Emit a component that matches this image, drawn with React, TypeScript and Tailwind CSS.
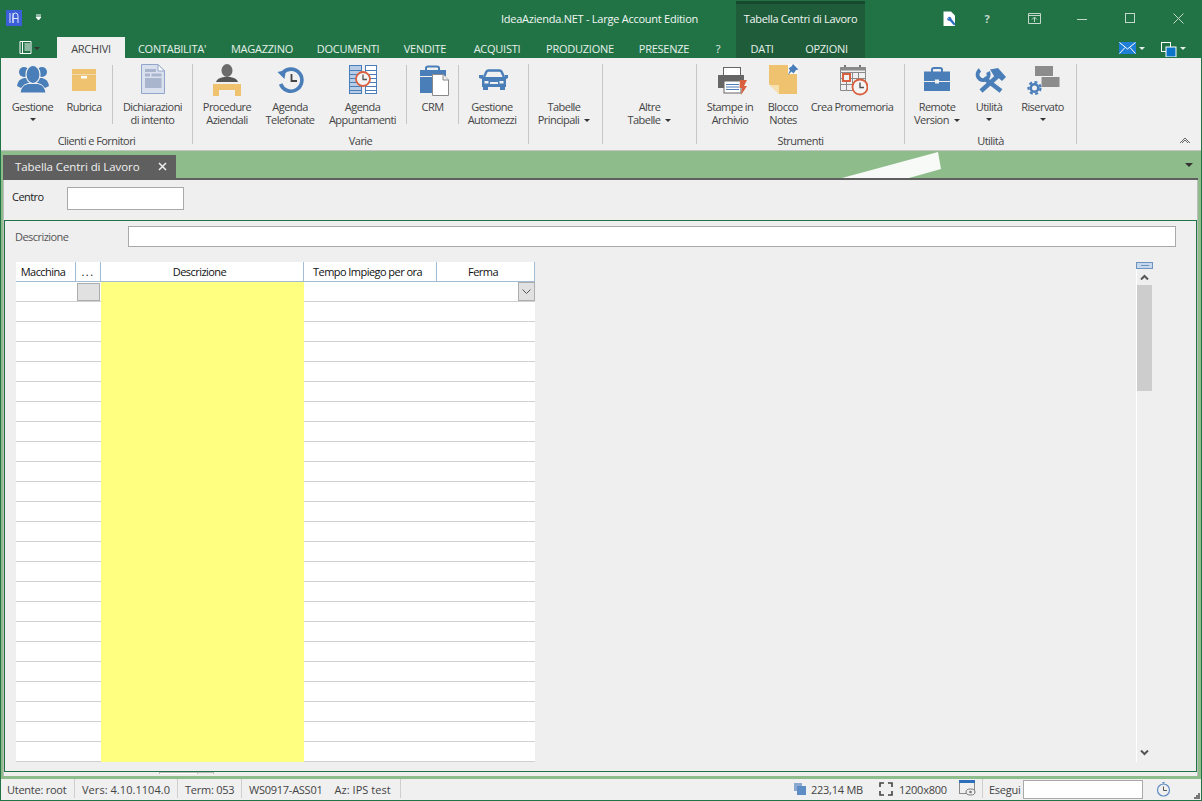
import React from 'react';

const BLUE = '#4a7eb9';
const AMBER = '#efc26f';
const GREY = '#6b6b6b';
const RED = '#d9603f';

const IconPeople = () => (
  <svg width="32" height="32" viewBox="0 0 32 32">
    <circle cx="7" cy="8" r="5" fill={BLUE} />
    <circle cx="25" cy="8" r="5" fill={BLUE} />
    <path d="M0 22 Q1 15 7 14 L25 14 Q31 15 32 22 L28 24 L4 24Z" fill={BLUE} />
    <ellipse cx="16" cy="10.5" rx="7" ry="9" fill={BLUE} stroke="#f0f0f0" strokeWidth="1.2" />
    <path d="M3 29 Q4 21 11 19.5 L21 19.5 Q28 21 29 29Z" fill={BLUE} stroke="#f0f0f0" strokeWidth="1" />
  </svg>
);

const IconBox = () => (
  <svg width="32" height="32" viewBox="0 0 32 32">
    <rect x="4" y="5" width="24" height="5" fill={AMBER} />
    <rect x="4" y="10.5" width="24" height="16.5" fill={AMBER} />
    <rect x="13" y="12" width="6" height="2.5" fill="#fff" />
  </svg>
);

const IconDoc = () => (
  <svg width="32" height="32" viewBox="0 0 32 32">
    <path d="M4.5 .5 H21 L27.5 7 V29.5 H4.5Z" fill="#d9e0ee" stroke="#93a6ca" />
    <path d="M21 .5 V7 H27.5Z" fill="#fff" stroke="#93a6ca" />
    <rect x="8" y="5" width="11" height="3" fill="#a9b5cc" />
    <rect x="8" y="9.5" width="5" height="3" fill="#a9b5cc" />
    <rect x="14.5" y="9.5" width="10" height="3" fill="#a9b5cc" />
    <rect x="8" y="14" width="16.5" height="10" fill="#a9b5cc" />
  </svg>
);

const IconDesk = () => (
  <svg width="32" height="32" viewBox="0 0 32 32">
    <ellipse cx="16" cy="6.5" rx="5.5" ry="6.5" fill={GREY} />
    <path d="M5 18 Q6 14 13 13 L19 13 Q26 14 27 18Z" fill="#555" />
    <path d="M2 20 H30 V32 H24 V26 H8 V32 H2Z" fill={AMBER} />
  </svg>
);

const IconHistory = () => (
  <svg width="32" height="32" viewBox="0 0 32 32">
    <path d="M9 8.5 A11 11 0 1 1 6.6 20" fill="none" stroke={BLUE} strokeWidth="3.6" />
    <path d="M3.5 8 L12 6 L10.5 15Z" fill={BLUE} />
    <path d="M17.5 10 V17 H23" fill="none" stroke="#444" strokeWidth="1.8" />
  </svg>
);

const IconAgenda = () => (
  <svg width="32" height="32" viewBox="0 0 32 32">
    <rect x="2.5" y="1.5" width="12" height="28" fill="#b8cde5" stroke={BLUE} />
    <rect x="18.5" y="1.5" width="11" height="28" fill="#fff" stroke={BLUE} />
    {[6, 10, 14, 18, 22, 26].map(y => (
      <path key={y} d={`M3 ${y}.5 H14 M19 ${y}.5 H29`} stroke={BLUE} strokeWidth="1" />
    ))}
    <circle cx="16" cy="15" r="7" fill="#f4f4f4" stroke={RED} strokeWidth="1.8" />
    <path d="M16 10.5 V15.5 H20" fill="none" stroke="#555" strokeWidth="1.3" />
  </svg>
);

const IconCrm = () => (
  <svg width="32" height="32" viewBox="0 0 32 32">
    <path d="M9 6 V4 Q9 2.5 11 2.5 H20 Q22 2.5 22 4 V6" fill="none" stroke={BLUE} strokeWidth="2" />
    <rect x="3" y="6" width="26" height="6" fill={BLUE} />
    <rect x="3" y="13" width="26" height="16" fill={BLUE} />
    <path d="M15.5 10.5 H26 L31.5 16 V31.5 H15.5Z" fill="#fff" stroke="#8a8a8a" />
    <path d="M26 10.5 V16 H31.5" fill="#eee" stroke="#8a8a8a" />
  </svg>
);

const IconCar = () => (
  <svg width="32" height="32" viewBox="0 0 32 32" className="overflow-visible">
    <path d="M8 13 L10.5 7.5 Q11 6.5 12.5 6.5 H23.5 Q25 6.5 25.5 7.5 L28 13" fill="none" stroke={BLUE} strokeWidth="2.4" />
    <path d="M3 11 H7 V13 H29 V11 H32 V14 L30 15 V23 H6 V15 L3 14Z" fill={BLUE} />
    <rect x="7" y="23" width="5" height="3" fill={BLUE} />
    <rect x="24" y="23" width="5" height="3" fill={BLUE} />
    <rect x="8.5" y="17" width="4" height="2.5" fill="#f0f0f0" />
    <rect x="23.5" y="17" width="4" height="2.5" fill="#f0f0f0" />
    <rect x="14" y="18" width="8" height="2" fill="#f0f0f0" />
  </svg>
);

const IconPrinter = () => (
  <svg width="32" height="32" viewBox="0 0 32 32" className="overflow-visible">
    <rect x="9.5" y="3.5" width="17" height="8" fill="#fff" stroke="#666" />
    <path d="M4 11 H30 V24 H26 V18 H10 V24 H4Z" fill="#666" />
    <rect x="10" y="17" width="17" height="12" fill="#fff" stroke="#666" />
    <path d="M12 20.5 H25 M12 23 H25 M12 25.5 H25" stroke={BLUE} strokeWidth="1.2" />
    <path d="M26 16 H33 L30 22 H33 L27 31 L28 24 H25.5Z" fill={RED} />
  </svg>
);

const IconNote = () => (
  <svg width="32" height="32" viewBox="0 0 32 32" className="overflow-visible">
    <path d="M2 1 H30 V30 H12 L2 20Z" fill={AMBER} />
    <path d="M2.5 21 H12 V30Z" fill="#f8e0ae" />
    <rect x="21" y="0" width="10" height="10" fill="#f7f7f7" />
    <path d="M26 0 L31.5 5.5 L29 6 L26.5 9.5 L24.5 7.5 L21 11 L23 6 L21.5 4.5 L25 2Z" fill={BLUE} />
  </svg>
);

const IconCalendar = () => (
  <svg width="32" height="32" viewBox="0 0 32 32">
    <path d="M4.5 3.5 H29.5 V26.5 H4.5Z M4.5 8.5 H29.5 M4.5 14.5 H29.5 M4.5 20.5 H29.5 M10.5 8.5 V26.5 M16.5 8.5 V26.5 M22.5 8.5 V26.5" fill="#f0f0f0" stroke="#8a8a8a" />
    <path d="M9 1 V5 M24 1 V5" stroke="#777" strokeWidth="2" />
    <rect x="4.5" y="3" width="25" height="3.5" fill="#8a8a8a" />
    <rect x="7" y="10" width="7" height="7" fill="#f0f0f0" stroke={RED} strokeWidth="2" />
    <circle cx="24" cy="23" r="7.5" fill="#f4f4f4" stroke={RED} strokeWidth="1.8" />
    <path d="M24 18.5 V23.5 H28" fill="none" stroke="#555" strokeWidth="1.4" />
  </svg>
);

const IconCase = () => (
  <svg width="32" height="32" viewBox="0 0 32 32">
    <path d="M11 8 V5.5 Q11 4 13 4 H19 Q21 4 21 5.5 V8" fill="none" stroke={BLUE} strokeWidth="2" />
    <rect x="3" y="7.5" width="26" height="9.5" fill={BLUE} />
    <rect x="3" y="18" width="26" height="9" fill={BLUE} />
    <rect x="14" y="15.5" width="4" height="4" fill="#f0f0f0" />
  </svg>
);

const IconTools = () => (
  <svg width="32" height="32" viewBox="0 0 32 32" className="overflow-visible">
    <path d="M11 14 L28 27" stroke={BLUE} strokeWidth="4.5" />
    <path d="M7 6 A5.5 5.5 0 1 0 15 8" fill="none" stroke={BLUE} strokeWidth="4" />
    <path d="M26 11 L8 27" stroke={BLUE} strokeWidth="4.5" />
    <path d="M17 5.5 L25 4 L33 13 L29 17 L25 13.5 L21 12Z" fill={BLUE} />
  </svg>
);

const IconConfig = () => (
  <svg width="32" height="32" viewBox="0 0 32 32" className="overflow-visible">
    <rect x="8" y="2" width="18" height="10" fill="#8c8c8c" />
    <rect x="14.5" y="13" width="18" height="10" fill="#8c8c8c" />
    <circle cx="7.5" cy="24" r="3.8" fill="none" stroke={BLUE} strokeWidth="2.6" />
    <circle cx="7.5" cy="24" r="6" fill="none" stroke={BLUE} strokeWidth="2.2" strokeDasharray="3 2.5" />
  </svg>
);

const Caret = ({ className = '' }: { className?: string }) => (
  <span className={`inline-block w-0 h-0 border-x-[3px] border-x-transparent border-t-[3px] border-t-[#333] ${className}`} />
);

interface RibbonButtonProps {
  width: string;
  icon?: React.ReactNode;
  label: string;
  second?: string;
  caret?: 'inline' | 'below';
}

const RibbonButton: React.FC<RibbonButtonProps> = ({ width, icon, label, second, caret }) => (
  <div className={`${width} flex flex-col items-center shrink-0`}>
    <div className="h-[36px] mt-[6px] flex justify-center">{icon}</div>
    <div className="text-center leading-[13px] whitespace-nowrap">{label}</div>
    {second && (
      <div className="text-center leading-[13px] whitespace-nowrap">
        {second}
        {caret === 'inline' && <Caret className="ml-[5px] mb-[2px]" />}
      </div>
    )}
    {caret === 'below' && <Caret className="mt-[5px]" />}
  </div>
);

const InnerSep = ({ className = '' }: { className?: string }) => (
  <div className={`w-px h-[59px] mt-[7px] bg-[#c6c6c6] shrink-0 ${className}`} />
);

const GroupSep = () => <div className="w-px h-[80px] mt-[6px] bg-[#c6c6c6] shrink-0" />;

const Group = ({ width, label, children }: { width: string; label?: string; children: React.ReactNode }) => (
  <div className={`${width} shrink-0 flex flex-col`}>
    <div className="flex h-[76px]">{children}</div>
    <div className="text-center leading-[13px]">{label}</div>
  </div>
);

const RibbonTab = ({ width, children }: { width: string; children: React.ReactNode }) => (
  <div className={`${width} shrink-0 text-center leading-[21px] pt-px text-[#e6f0ea]`}>{children}</div>
);

const StatusSep = () => <div className="w-px h-[19px] bg-[#cfcfcf] shrink-0" />;

const columns = [
  { name: 'Macchina', width: 'w-[60px] pr-[5px]' },
  { name: '...', width: 'w-[25px] tracking-[1.5px]' },
  { name: 'Descrizione', width: 'w-[203px] pr-[5px]' },
  { name: 'Tempo Impiego per ora', width: 'w-[133px] pr-[5px]' },
  { name: 'Ferma', width: 'w-[98px] pr-[5px]' },
];

const rows = Array.from({ length: 24 }, (_, i) => i);

export default function App() {
  return (
    <div className="w-[1202px] h-[801px] overflow-hidden bg-[#217346] font-['Open_Sans',sans-serif] text-[11px] tracking-[-0.25px] text-[#444]">
      {/* Title bar */}
      <div className="flex h-[37px] text-[#f2f7f4]">
        <div className="w-[6px] shrink-0" />
        <div className="w-[16px] h-[16px] mt-[10px] bg-[#3b5fd9] shrink-0 flex items-center justify-center">
          <svg width="12" height="12" viewBox="0 0 12 12">
            <path d="M2 1 V11 M5 1 V11 M5 11 V4 Q5 1 7.5 1 Q10 1 10 4 V11 M5 6.5 H10" fill="none" stroke="#dfe6fb" strokeWidth="1" />
          </svg>
        </div>
        <div className="w-[13px] shrink-0" />
        <svg width="8" height="8" viewBox="0 0 8 8" className="mt-[14px] shrink-0">
          <path d="M1 1 H6 M1 3 H6 L3.5 6Z" fill="#fff" stroke="#fff" strokeWidth="1" />
        </svg>
        <div className="w-[458px] shrink-0" />
        <div className="w-[235px] shrink-0 leading-[38px] whitespace-nowrap">IdeaAzienda.NET - Large Account Edition</div>
        <div className="w-[129px] shrink-0 mt-px bg-[#1e5c3a] border-t-[3px] border-[#17492e] text-center leading-[30px] tracking-[-0.3px] whitespace-nowrap">Tabella Centri di Lavoro</div>
        <div className="w-[92px] shrink-0 flex justify-end pt-[11px]">
          <svg width="14" height="16" viewBox="0 0 14 16">
            <path d="M.5 .5 H8 L12 4.5 V15 H.5Z" fill="#fff" />
            <path d="M5 6 Q8 5 8.5 8 L12.5 13 L11 14.5 L7 10 Q4 10 4 7 L6 8Z" fill="#2a6fc0" />
          </svg>
        </div>
        <div className="w-[60px] shrink-0 text-center leading-[37px] text-[#c4d8cc] font-bold">?</div>
        <div className="w-[34px] shrink-0 flex justify-center pt-[13px]">
          <svg width="13" height="11" viewBox="0 0 13 11">
            <path d="M.5 .5 H12.5 V10.5 H.5Z M.5 2.5 H12.5 M6.5 9 V4.5 M4 6.5 L6.5 4 L9 6.5" fill="none" stroke="#c4d8cc" />
          </svg>
        </div>
        <div className="w-[62px] shrink-0 flex justify-center pt-[19px]">
          <div className="w-[10px] h-px bg-[#c4d8cc]" />
        </div>
        <div className="w-[34px] shrink-0 flex justify-center pt-[13px]">
          <div className="w-[10px] h-[10px] border border-[#c4d8cc]" />
        </div>
        <div className="w-[55px] shrink-0 pl-[26px] pt-[13px]">
          <svg width="11" height="11" viewBox="0 0 11 11">
            <path d="M.5 .5 L10.5 10.5 M10.5 .5 L.5 10.5" stroke="#c4d8cc" />
          </svg>
        </div>
      </div>

      {/* Ribbon tabs */}
      <div className="flex h-[21px]">
        <div className="w-[57px] shrink-0 pl-[19px] pt-[4px] flex gap-[2px]">
          <svg width="13" height="13" viewBox="0 0 13 13">
            <path d="M1 .5 H12 V12.5 H1Z" fill="none" stroke="#fff" />
            <path d="M3.5 1 V12 M5.5 3 H11 M5.5 5 H11 M5.5 7 H11 M5.5 9 H11" fill="none" stroke="#fff" strokeWidth="1" />
          </svg>
          <Caret className="mt-[6px] border-t-[#9db9a9]" />
        </div>
        <div className="w-[68px] shrink-0 text-center leading-[21px] pt-px bg-[#f0f0f0] text-[#444]">ARCHIVI</div>
        <RibbonTab width="w-[94px]">CONTABILITA'</RibbonTab>
        <RibbonTab width="w-[86px]">MAGAZZINO</RibbonTab>
        <RibbonTab width="w-[86px]">DOCUMENTI</RibbonTab>
        <RibbonTab width="w-[68px]">VENDITE</RibbonTab>
        <RibbonTab width="w-[76px]">ACQUISTI</RibbonTab>
        <RibbonTab width="w-[90px]">PRODUZIONE</RibbonTab>
        <RibbonTab width="w-[78px]">PRESENZE</RibbonTab>
        <RibbonTab width="w-[30px]">?</RibbonTab>
        <div className="w-[3px] shrink-0" />
        <div className="w-[129px] shrink-0 flex bg-[#1e5c3a]">
          <RibbonTab width="w-[52px]">DATI</RibbonTab>
          <RibbonTab width="w-[77px]">OPZIONI</RibbonTab>
        </div>
        <div className="w-[254px] shrink-0" />
        <div className="flex pt-[5px] items-start">
          <svg width="17" height="12" viewBox="0 0 17 12" className="shrink-0">
            <rect width="17" height="12" fill="#1f7fd6" />
            <path d="M.5 .5 L8.5 7 L16.5 .5 M.5 11.5 L6 5.5 M16.5 11.5 L11 5.5" fill="none" stroke="#fff" />
          </svg>
          <Caret className="ml-[3px] mt-[5px] border-t-[#e6f0ea]" />
          <svg width="16" height="15" viewBox="0 0 16 15" className="ml-[16px] shrink-0">
            <rect x=".5" y=".5" width="9" height="9" fill="#217346" stroke="#fff" />
            <rect x="5" y="5" width="10" height="10" fill="#0b74c9" stroke="#fff" strokeWidth="1" />
          </svg>
          <Caret className="ml-[3px] mt-[5px] border-t-[#e6f0ea]" />
        </div>
      </div>

      {/* Ribbon */}
      <div className="flex h-[92px] mx-px bg-[#f0f0f0] tracking-[-0.55px]">
        <Group width="w-[191px]" label="Clienti e Fornitori">
          <div className="w-[6px] shrink-0" />
          <RibbonButton width="w-[51px]" icon={<IconPeople />} label="Gestione" caret="below" />
          <RibbonButton width="w-[52px]" icon={<IconBox />} label="Rubrica" />
          <div className="w-[2px] shrink-0" />
          <InnerSep />
          <RibbonButton width="w-[79px]" icon={<IconDoc />} label="Dichiarazioni" second="di intento" />
        </Group>
        <GroupSep />
        <Group width="w-[335px]" label="Varie">
          <RibbonButton width="w-[68px]" icon={<IconDesk />} label="Procedure" second="Aziendali" />
          <RibbonButton width="w-[58px]" icon={<IconHistory />} label="Agenda" second="Telefonate" />
          <RibbonButton width="w-[87px]" icon={<IconAgenda />} label="Agenda" second="Appuntamenti" />
          <InnerSep />
          <RibbonButton width="w-[51px]" icon={<IconCrm />} label="CRM" />
          <InnerSep />
          <RibbonButton width="w-[66px]" icon={<IconCar />} label="Gestione" second="Automezzi" />
        </Group>
        <GroupSep />
        <Group width="w-[73px]">
          <RibbonButton width="w-[70px]" label="Tabelle" second="Principali" caret="inline" />
        </Group>
        <GroupSep />
        <Group width="w-[93px]">
          <RibbonButton width="w-[93px]" label="Altre" second="Tabelle" caret="inline" />
        </Group>
        <GroupSep />
        <Group width="w-[207px]" label="Strumenti">
          <RibbonButton width="w-[66px]" icon={<IconPrinter />} label="Stampe in" second="Archivio" />
          <RibbonButton width="w-[40px]" icon={<IconNote />} label="Blocco" second="Notes" />
          <RibbonButton width="w-[98px]" icon={<IconCalendar />} label="Crea Promemoria" />
        </Group>
        <GroupSep />
        <Group width="w-[171px]" label="Utilità">
          <RibbonButton width="w-[64px]" icon={<IconCase />} label="Remote" second="Version" caret="inline" />
          <RibbonButton width="w-[40px]" icon={<IconTools />} label="Utilità" caret="below" />
          <RibbonButton width="w-[67px]" icon={<IconConfig />} label="Riservato" caret="below" />
        </Group>
        <GroupSep />
        <div className="flex-1 flex items-end justify-end pr-[10px] pb-[6px]">
          <svg width="12" height="8" viewBox="0 0 12 8">
            <path d="M1 7 L6 2 L11 7 M3 7 L6 4 L9 7" fill="none" stroke="#666" />
          </svg>
        </div>
      </div>
      <div className="h-px mx-px bg-[#c4c4c4]" />

      {/* Document tab strip */}
      <div className="relative flex h-[27px] mx-px bg-[#8fbc8b]">
        <div className="w-[173px] h-[23px] ml-[2px] mt-[4px] bg-[#5f5f5f] flex items-center text-[#f0f0f0] text-[11.5px] tracking-[-0.08px]">
          <span className="ml-[12px] w-[135px] whitespace-nowrap">Tabella Centri di Lavoro</span>
          <svg width="9" height="9" viewBox="0 0 9 9" className="ml-[8px]">
            <path d="M1 1 L8 8 M8 1 L1 8" stroke="#f0f0f0" strokeWidth="1.5" />
          </svg>
        </div>
        <svg width="110" height="27" viewBox="0 0 110 27" className="absolute left-[838px] top-0">
          <path d="M3 27 L99 1 L102 18 L70 27Z" fill="#f7faf6" />
        </svg>
        <div className="absolute right-[8px] top-[12px] w-0 h-0 border-x-[4px] border-x-transparent border-t-[4px] border-t-[#333]" />
      </div>

      {/* Work area */}
      <div className="mx-px bg-[#8fbc8b] px-[2px] h-[601px] tracking-[-0.55px]">
        <div className="h-[2px] w-[1195px] bg-[#5f5f5f]" />
        <div className="w-[1195px] border-l border-r border-[#bdbdbd] bg-[#efefef]">
          {/* Centro header */}
          <div className="flex h-[40px] text-[#222]">
            <div className="w-[8px] shrink-0" />
            <div className="w-[55px] shrink-0 pt-[10px] leading-[14px]">Centro</div>
            <div className="w-[117px] h-[23px] mt-[7px] bg-white border border-[#a9a9a9]" />
          </div>

          {/* Detail panel */}
          <div className="h-[552px] border border-[#217346] bg-[#efefef]">
            <div className="flex mt-[5px] ml-[10px]">
              <div className="w-[113px] shrink-0 leading-[21px] text-[#555]">Descrizione</div>
              <div className="w-[1048px] h-[21px] bg-white border border-[#a9a9a9]" />
            </div>
            <div className="flex mt-[15px] ml-[11px]">
              {/* Grid */}
              <div className="w-[519px] shrink-0 text-[#111]">
                <div className="flex h-[20px] bg-white border-b border-[#a3bcd6]">
                  {columns.map(col => (
                    <div key={col.name} className={`${col.width} shrink-0 text-center leading-[19px] whitespace-nowrap border-r border-[#a3bcd6]`}>
                      {col.name}
                    </div>
                  ))}
                </div>
                {rows.map(i => (
                  <div key={i} className="flex h-[20px]">
                    <div className="w-[60px] shrink-0 bg-white border-b border-[#d0d0d0]" />
                    <div className="w-[25px] shrink-0 bg-white border-b border-[#d0d0d0]">
                      {i === 0 && <div className="w-[23px] h-[18px] mt-px ml-px bg-[#e1e1e1] border border-[#adadad]" />}
                    </div>
                    <div className="w-[203px] shrink-0 bg-[#ffff80]" />
                    <div className="w-[231px] shrink-0 flex justify-end bg-white border-b border-[#d0d0d0]">
                      {i === 0 && (
                        <div className="w-[17px] h-[19px] bg-[#e1e1e1] border border-[#adadad] flex items-center justify-center">
                          <svg width="9" height="5" viewBox="0 0 9 5">
                            <path d="M.5 .5 L4.5 4.5 L8.5 .5" fill="none" stroke="#555" />
                          </svg>
                        </div>
                      )}
                    </div>
                  </div>
                ))}
              </div>
              {/* Scrollbar */}
              <div className="w-[17px] h-[500px] ml-[601px] shrink-0 border-l border-white flex flex-col items-start">
                <div className="w-[17px] h-[7px] -ml-px shrink-0 bg-[#c5d8ee] border border-[#6d93bf] flex items-center justify-center">
                  <div className="w-[8px] h-px bg-[#6d93bf]" />
                </div>
                <svg width="9" height="6" viewBox="0 0 9 6" className="mt-[5px] ml-[3px] shrink-0">
                  <path d="M1 5.5 L4.5 2 L8 5.5" fill="none" stroke="#555" strokeWidth="2" />
                </svg>
                <div className="w-[15px] h-[106px] mt-[5px] bg-[#cdcdcd] shrink-0" />
                <div className="flex-1" />
                <svg width="9" height="6" viewBox="0 0 9 6" className="mb-[6px] ml-[3px] shrink-0">
                  <path d="M1 .5 L4.5 4 L8 .5" fill="none" stroke="#555" strokeWidth="2" />
                </svg>
              </div>
            </div>
          </div>

          {/* Hidden strip under the panel */}
          <div className="flex h-[4px] bg-[#efefef]">
            <div className="w-[155px] shrink-0" />
            <div className="w-[39px] h-[2px] bg-white border-x border-t border-[#bbb]" />
            <div className="w-[16px] h-[2px] border-r border-t border-[#bbb]" />
          </div>
        </div>
      </div>

      {/* Status bar */}
      <div className="flex h-[21px] mx-px items-start bg-[#f0f0f0] text-[#444] leading-[21px]">
        <div className="w-[73px] shrink-0 pl-[6px] whitespace-nowrap">Utente: root</div>
        <StatusSep />
        <div className="w-[102px] shrink-0 pl-[7px] whitespace-nowrap tracking-[0.05px]">Vers: 4.10.1104.0</div>
        <StatusSep />
        <div className="w-[63px] shrink-0 pl-[7px] whitespace-nowrap">Term: 053</div>
        <StatusSep />
        <div className="w-[158px] shrink-0 pl-[7px] flex gap-[12px] whitespace-nowrap">
          <span>WS0917-ASS01</span>
          <span className="tracking-[0.05px]">Az: IPS test</span>
        </div>
        <StatusSep />
        <div className="w-[393px] shrink-0" />
        <svg width="12" height="12" viewBox="0 0 12 12" className="mt-[4px] shrink-0">
          <rect x="0" y="0" width="8" height="8" fill="#8aa9d0" />
          <rect x="3" y="3" width="9" height="9" fill="#5e8cc4" />
        </svg>
        <div className="w-[73px] shrink-0 pl-[5px] whitespace-nowrap">223,14 MB</div>
        <svg width="14" height="14" viewBox="0 0 14 14" className="mt-[3px] shrink-0">
          <path d="M1 5 V1 H5 M9 1 H13 V5 M13 9 V13 H9 M5 13 H1 V9" fill="none" stroke="#444" strokeWidth="1.6" />
        </svg>
        <div className="w-[66px] shrink-0 pl-[6px] whitespace-nowrap">1200x800</div>
        <svg width="17" height="16" viewBox="0 0 17 16" className="mt-[1px] shrink-0">
          <rect x=".5" y=".5" width="15" height="13" fill="#f0f0f0" stroke="#8a8a8a" />
          <rect x="0" y="0" width="16" height="3" fill="#2d6fb8" />
          <ellipse cx="11.5" cy="12" rx="4.5" ry="3" fill="#f0f0f0" stroke="#777" />
          <circle cx="11.5" cy="12" r="1.3" fill="#777" />
        </svg>
        <div className="w-[6px] shrink-0" />
        <StatusSep />
        <div className="w-[40px] shrink-0 pl-[6px] whitespace-nowrap">Esegui</div>
        <div className="w-[120px] h-[19px] mt-px bg-white border border-[#a9a9a9] shrink-0" />
        <svg width="15" height="17" viewBox="0 0 15 17" className="ml-[13px] mt-[2px] shrink-0">
          <circle cx="7.5" cy="9" r="6" fill="none" stroke="#5e8cc4" strokeWidth="1.2" />
          <path d="M7.5 5.5 V9.5 H11" fill="none" stroke="#555" />
          <path d="M6 1 H9 L7.5 3Z" fill="#5e8cc4" />
        </svg>
        <div className="flex-1 flex justify-end pr-[1px] pt-[14px]">
          <svg width="6" height="6" viewBox="0 0 6 6">
            <path d="M4 0h2v2H4zM2 2h2v2H2zM4 2h2v2H4zM0 4h2v2H0zM2 4h2v2H2zM4 4h2v2H4z" fill="#777" />
          </svg>
        </div>
      </div>
    </div>
  );
}
